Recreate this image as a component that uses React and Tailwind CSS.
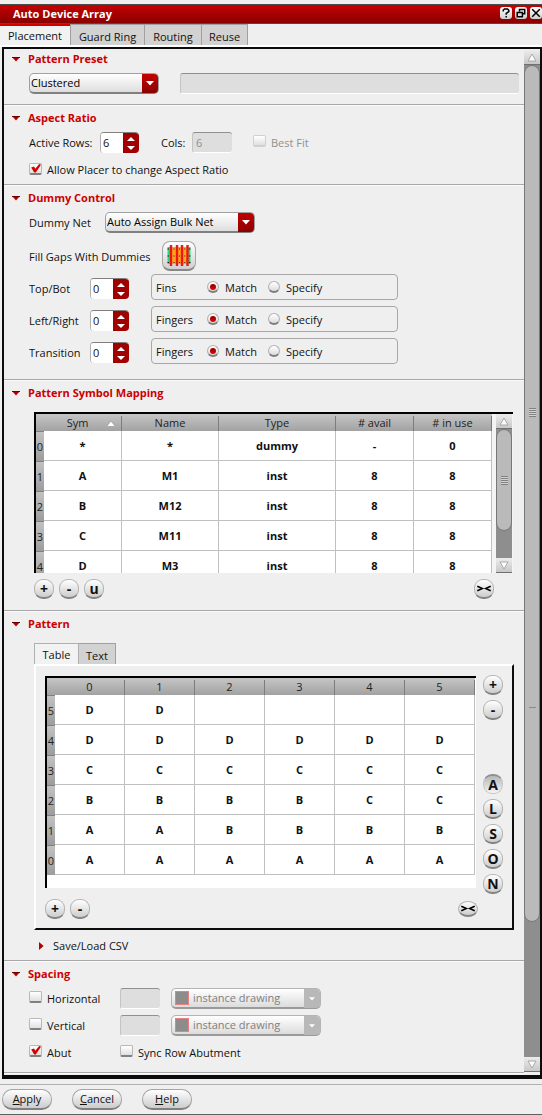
import React from "react";

const SECTION_BORDER = "border-b border-[#a8a8a8] shadow-[0_1px_0_#fafafa]";

function Section({ title, first, className = "", children }) {
  return (
    <section className={`${SECTION_BORDER} ${first ? "pt-px" : "pt-1"} ${className}`}>
      <h2 className="flex h-[18px] items-center pl-2 text-[11px] font-bold text-[#cc0000]">
        <button type="button" aria-label={`Collapse ${title}`} className="w-4">
          <svg width="8" height="5" viewBox="0 0 8 5" className="block">
            <path d="M0 0h8L4 4.6z" fill="#b00000" />
            <path d="M0 0h8v1H0z" fill="#6b0000" />
          </svg>
        </button>
        {title}
      </h2>
      {children}
    </section>
  );
}

function Combo({ label, value, width, disabled, swatch }) {
  return (
    <span className={`relative flex h-[21px] ${width}`}>
      <select
        aria-label={label}
        disabled={disabled}
        className={`h-full w-full appearance-none rounded-[5px] border border-b-2 bg-linear-to-b pr-5 text-[11px] leading-4 opacity-100 ${
          disabled
            ? "border-[#b4b4b4] border-b-[#9a9a9a] from-white to-[#dcdcdc] text-[#808080]"
            : "border-[#a0a0a0] border-b-[#808080] from-white to-[#dedede] text-black"
        } ${swatch ? "pl-[21px]" : "pl-px"}`}
      >
        <option>{value}</option>
      </select>
      {swatch && (
        <span className="pointer-events-none absolute top-[3px] left-1 h-[14px] w-[14px] border border-[#e88080] bg-[#8c8c8c]" />
      )}
      <span
        className={`pointer-events-none absolute top-px right-px bottom-px flex w-4 items-center justify-center rounded-r-[4px] ${
          disabled ? "bg-[#b8b8b8]" : "bg-linear-to-b from-[#c40000] to-[#8c0000]"
        }`}
      >
        <svg width={disabled ? 6 : 8} height={disabled ? 4 : 5} viewBox="0 0 8 5">
          <path d="M0 0h8L4 4.6z" fill="#fff" />
        </svg>
      </span>
    </span>
  );
}

function Spinner({ label, value }) {
  return (
    <span className="flex h-[21px] w-[39px] overflow-hidden rounded-[4px] border-t border-l border-t-[#808080] border-l-[#b0b0b0]">
      <input
        type="text"
        role="spinbutton"
        aria-valuenow={value}
        aria-label={label}
        defaultValue={value}
        className="w-full min-w-0 bg-white pl-[2px] text-[11px] outline-none"
      />
      <span className="flex w-4 shrink-0 flex-col items-center justify-center gap-[5px] bg-[#a00000]">
        <button type="button" aria-label={`Increase ${label}`}>
          <svg width="8" height="4" viewBox="0 0 8 4" className="block">
            <path d="M4 0l4 4H0z" fill="#fff" />
          </svg>
        </button>
        <button type="button" aria-label={`Decrease ${label}`}>
          <svg width="8" height="4" viewBox="0 0 8 4" className="block">
            <path d="M0 0h8L4 4z" fill="#fff" />
          </svg>
        </button>
      </span>
    </span>
  );
}

function Check({ label, checked, disabled }) {
  return (
    <label className={`flex items-center gap-[5px] whitespace-nowrap ${disabled ? "text-[#909090]" : ""}`}>
      <span className="relative mb-[3px] flex">
        <input
          type="checkbox"
          defaultChecked={checked}
          disabled={disabled}
          className={`h-3 w-[13px] appearance-none rounded-[2px] border border-b-2 bg-linear-to-b from-white to-[#e0e0e0] ${
            disabled ? "border-[#d0d0d0]" : "border-[#b8b8b8] border-b-[#808080]"
          }`}
        />
        {checked && (
          <svg width="10" height="9" viewBox="0 0 10 9" className="pointer-events-none absolute top-px left-[2px]">
            <path d="M0.2 3.4L3 2.4l1.3 2.4L8.2 0 10 0.8 4.8 8.6H3.2z" fill="#d40000" />
          </svg>
        )}
      </span>
      {label}
    </label>
  );
}

function Radio({ name, label, checked }) {
  return (
    <label className="flex items-center gap-[6px]">
      <span className="relative mb-[3px] flex">
        <input
          type="radio"
          name={name}
          defaultChecked={checked}
          className="h-3 w-3 appearance-none rounded-full border border-b-2 border-[#b0b0b0] border-b-[#7c7c7c] bg-linear-to-b from-white to-[#dcdcdc]"
        />
        {checked && (
          <span className="pointer-events-none absolute top-[3px] left-[3px] h-[6px] w-[6px] rounded-full bg-linear-to-b from-[#8c0000] to-[#f00000]" />
        )}
      </span>
      {label}
    </label>
  );
}

function RoundButton({ children, label, pressed, flat }) {
  return (
    <button
      type="button"
      aria-label={label}
      aria-pressed={pressed}
      className={`flex w-5 items-center justify-center text-[14px] leading-none font-bold ${
        flat ? "h-4 rounded-[50%]" : "h-5 rounded-[9px]"
      } ${
        pressed
          ? "border border-t-2 border-[#c8c8c8] border-t-[#909090] bg-linear-to-b from-[#b8b8b8] to-[#f4f4f4]"
          : "border border-b-2 border-[#b4b4b4] border-b-[#848484] bg-linear-to-b from-white to-[#cdcdcd]"
      }`}
    >
      {children}
    </button>
  );
}

function CollapseGlyph() {
  return (
    <svg width="14" height="7" viewBox="0 0 14 7" fill="none" stroke="#000" strokeWidth="1.5">
      <path d="M0.3 1.2L5.4 3.5 0.3 5.8M13.7 1.2L8.6 3.5l5.1 2.3" />
    </svg>
  );
}

function ScrollArrow({ down }) {
  return (
    <button
      type="button"
      aria-label={down ? "Scroll down" : "Scroll up"}
      className="flex h-[15px] shrink-0 items-center justify-center border-b border-[#707070] bg-linear-to-b from-[#ececec] to-[#c8c8c8]"
    >
      <svg width="10" height="9" viewBox="0 0 10 9">
        <path
          d={down ? "M1 1h8L5 8z" : "M5 1l4 7H1z"}
          fill="#fafafa"
          stroke="#9a9a9a"
          strokeWidth="0.8"
        />
      </svg>
    </button>
  );
}

function Grip() {
  return (
    <span className="h-[9px] w-[7px] bg-[repeating-linear-gradient(to_bottom,#808080_0,#808080_1px,#d4d4d4_1px,#d4d4d4_2px)]" />
  );
}

const HEAD = "h-[17px] bg-linear-to-b from-[#c6c6c6] to-[#a2a2a2] p-0 text-center align-bottom font-normal text-[#222]";
const ROW_HEAD =
  "h-[30px] overflow-hidden border-t border-[#808080] bg-linear-to-b from-[#c2c2c2] to-[#9c9c9c] p-0 text-center font-normal text-[#222]";
const CELL = "h-[30px] border-r border-b border-[#c0c0c0] bg-white p-0 text-center font-bold";

const MAPPING = [
  ["*", "*", "dummy", "-", "0"],
  ["A", "M1", "inst", "8", "8"],
  ["B", "M12", "inst", "8", "8"],
  ["C", "M11", "inst", "8", "8"],
  ["D", "M3", "inst", "8", "8"],
];

const PATTERN = [
  ["D", "D", "", "", "", ""],
  ["D", "D", "D", "D", "D", "D"],
  ["C", "C", "C", "C", "C", "C"],
  ["B", "B", "B", "B", "C", "C"],
  ["A", "A", "B", "B", "B", "B"],
  ["A", "A", "A", "A", "A", "A"],
];

function HeadCell({ children, sorted }) {
  return (
    <th scope="col" className={HEAD}>
      <span className={`relative mt-[2px] flex h-[15px] items-center justify-center border-r border-[#7c7c7c] pb-[2px] ${sorted ? "pr-[10px]" : ""}`}>
        {children}
        {sorted && (
          <svg width="8" height="5" viewBox="0 0 8 5" className="absolute top-[5px] right-[6px]">
            <path d="M4 0l4 5H0z" fill="#fff" />
            <path d="M0 5L4 0l4 5" fill="none" stroke="#666" strokeWidth="0.4" />
          </svg>
        )}
      </span>
    </th>
  );
}

function MappingTable() {
  return (
    <div className="mt-[10px] mr-[11px] ml-[30px] flex h-[161px] overflow-hidden border-t-2 border-l-2 border-black bg-[#f4f4f4]">
      <div className="mr-1 flex-1 overflow-hidden">
        <table className="w-full table-fixed border-separate border-spacing-0">
          <colgroup>
            <col className="w-2" />
            <col className="w-[78px]" />
            <col className="w-[97px]" />
            <col />
            <col className="w-[78px]" />
            <col className="w-[78px]" />
          </colgroup>
          <thead>
            <tr>
              <td className={HEAD} />
              <HeadCell sorted>Sym</HeadCell>
              <HeadCell>Name</HeadCell>
              <HeadCell>Type</HeadCell>
              <HeadCell># avail</HeadCell>
              <HeadCell># in use</HeadCell>
            </tr>
          </thead>
          <tbody>
            {MAPPING.map((row, i) => (
              <tr key={i}>
                <th scope="row" className={ROW_HEAD}>{i}</th>
                {row.map((value, j) => (
                  <td key={j} className={CELL}>{value}</td>
                ))}
              </tr>
            ))}
          </tbody>
        </table>
      </div>
      <div className="mr-px flex w-4 flex-col bg-[#8e8e8e]">
        <ScrollArrow />
        <div className="flex flex-[100] items-center justify-center rounded-[8px] border border-[#787878] bg-[#bababa]">
          <Grip />
        </div>
        <div className="flex-[27]" />
        <ScrollArrow down />
      </div>
    </div>
  );
}

function PatternTable() {
  return (
    <div className="mt-px flex-1 self-start border-t-2 border-l-2 border-black bg-white pr-px pb-[13px]">
      <table className="w-full table-fixed border-separate border-spacing-0">
        <colgroup>
          <col className="w-2" />
        </colgroup>
        <thead>
          <tr>
            <td className={HEAD} />
            {[0, 1, 2, 3, 4, 5].map((n) => (
              <HeadCell key={n}>{n}</HeadCell>
            ))}
          </tr>
        </thead>
        <tbody>
          {PATTERN.map((row, i) => (
            <tr key={i}>
              <th scope="row" className={ROW_HEAD}>{5 - i}</th>
              {row.map((value, j) => (
                <td key={j} className={CELL}>{value}</td>
              ))}
            </tr>
          ))}
        </tbody>
      </table>
    </div>
  );
}

function DummyRow({ label, unit }) {
  return (
    <div className="flex h-[26px] items-center">
      <span className="w-[61px] pt-1">{label}</span>
      <span className="pt-[3px]">
        <Spinner label={label} value="0" />
      </span>
      <fieldset
        aria-label={`${label} ${unit}`}
        className="ml-[22px] flex h-[26px] w-[247px] items-center rounded-[4px] border border-[#a8a8a8] pt-[2px] pl-1"
      >
        <span className="w-[51px]">{unit}</span>
        <span className="flex w-[61px]">
          <Radio name={label} label="Match" checked />
        </span>
        <Radio name={label} label="Specify" />
      </fieldset>
    </div>
  );
}

const DISABLED_FIELD =
  "h-[21px] rounded-[3px] border-t border-l border-t-[#909090] border-l-[#c4c4c4] border-b border-b-white bg-[#dedede] text-[#909090]";

function SpacingRow({ label }) {
  return (
    <div className="flex h-[21px] items-center">
      <span className="flex w-[91px]">
        <Check label={label} />
      </span>
      <input aria-label={`${label} spacing`} disabled className={`${DISABLED_FIELD} mr-[11px] w-10`} />
      <Combo label={`${label} layer`} value="instance drawing" width="w-[150px]" disabled swatch />
    </div>
  );
}

function TitleButton({ label, children }) {
  return (
    <button
      type="button"
      aria-label={label}
      className="flex h-3 w-3 items-center justify-center rounded-[3px] bg-linear-to-b from-white to-[#d0d0d0]"
    >
      <svg width="10" height="10" viewBox="0 0 10 10" fill="none" stroke="#000" strokeWidth="1.5">
        {children}
      </svg>
    </button>
  );
}

function FooterButton({ children }) {
  return (
    <button
      type="button"
      className="h-[21px] w-[50px] rounded-[10px] border border-b-2 border-[#a4a4a4] border-b-[#808080] bg-linear-to-b from-white to-[#cccccc] leading-4"
    >
      {children}
    </button>
  );
}

export default function App() {
  return (
    <div className="bg-[#efefef] pt-1 font-['Open_Sans','Noto_Sans',sans-serif] text-[11px] leading-4 text-[#111]">
      <header className="flex h-5 items-center border-y border-[#4a4a4a] bg-linear-to-b from-[#c60000] to-[#8a0000] pl-[13px]">
        <h1 className="flex-1 font-bold text-white">Auto Device Array</h1>
        <div className="mb-[2px] flex gap-[3px]">
          <TitleButton label="Help">
            <path d="M2.2 3.6V2.2L3.4 1h3.2l1.2 1.2v1.3L5.2 5.4v1.4M5.2 8v1.5" />
          </TitleButton>
          <TitleButton label="Restore">
            <path d="M3.5 3.5v-2h5.2v4.2H6.8M1.2 4.5h5.2v4.3H1.2z" />
          </TitleButton>
          <TitleButton label="Close">
            <path d="M1.2 1.2l7.6 7.6M8.8 1.2L1.2 8.8" />
          </TitleButton>
        </div>
      </header>

      <nav role="tablist" className="flex h-[21px]">
        <button type="button" role="tab" aria-selected="true" className="w-[70px] border-t-2 border-[#d40000] bg-[#f2f2f2]">
          Placement
        </button>
        <button type="button" role="tab" className="w-[75px] border-t border-r border-l border-[#a0a0a0] bg-[#d2d2d2] pt-[3px]">
          Guard Ring
        </button>
        <button type="button" role="tab" className="w-[57px] border-t border-r border-[#a0a0a0] bg-[#d2d2d2] pt-[3px]">
          Routing
        </button>
        <button type="button" role="tab" className="w-[46px] border-t border-r border-[#a0a0a0] bg-[#d2d2d2] pt-[3px]">
          Reuse
        </button>
      </nav>
      <div className="h-[2px] bg-white" />

      <main className="ml-[2px] flex border-t-2 border-r-2 border-b-4 border-l-2 border-[#0c0c0c]">
        <div className="min-w-0 flex-1 pb-[2px]">
          <Section title="Pattern Preset" first className="pb-[10px]">
            <div className="mt-[5px] flex gap-[21px] pr-[5px] pl-[25px]">
              <Combo label="Pattern preset" value="Clustered" width="w-[130px]" />
              <input aria-label="Preset options" disabled className={`${DISABLED_FIELD} min-w-0 flex-1`} />
            </div>
          </Section>

          <Section title="Aspect Ratio" className="pb-[5px]">
            <div className="mt-[5px] flex h-[21px] items-center pl-[25px]">
              <span className="w-[71px]">Active Rows:</span>
              <Spinner label="Active Rows" value="6" />
              <label htmlFor="cols" className="ml-[22px] w-[31px]">Cols:</label>
              <input id="cols" disabled defaultValue="6" className={`${DISABLED_FIELD} mr-[21px] w-10 pl-[3px]`} />
              <Check label="Best Fit" disabled />
            </div>
            <div className="mt-2 flex h-[18px] items-center pl-[25px]">
              <Check label="Allow Placer to change Aspect Ratio" checked />
            </div>
          </Section>

          <Section title="Dummy Control" className="pb-[15px]">
            <div className="pl-[25px]">
              <div className="mt-[5px] flex items-center">
                <span className="w-[76px]">Dummy Net</span>
                <Combo label="Dummy Net" value="Auto Assign Bulk Net" width="w-[150px]" />
              </div>
              <div className="mt-2 flex items-center">
                <span className="w-[133px] pt-[2px]">Fill Gaps With Dummies</span>
                <button
                  type="button"
                  aria-label="Fill gaps with dummies"
                  className="flex h-[30px] w-[34px] items-center justify-center rounded-[8px] border border-b-2 border-[#a8a8a8] border-b-[#888888] bg-linear-to-b from-white to-[#d0d0d0]"
                >
                  <svg width="24" height="22" viewBox="0 0 24 22">
                    <path d="M3 2h18v17H3z" fill="#ffa51e" />
                    <path d="M0.5 2h2.5v17H0.5zM21 2h2.5v17H21z" fill="#23dc82" />
                    <path
                      d="M0.5 4h1.5M6.5 4h1M12 4h1M17.3 4h1M22 4h1.5M0.5 11h1.5M6.5 11h1M12 11h1M17.3 11h1M22 11h1.5M0.5 17.5h1.5M6.5 17.5h1M12 17.5h1M17.3 17.5h1M22 17.5h1.5"
                      stroke="#222"
                      strokeWidth="1"
                    />
                    <path d="M4 0v21M10 0v21M15 0v21M20.5 0v21" stroke="#f01414" strokeWidth="2.4" />
                  </svg>
                </button>
              </div>
              <div className="mt-[3px] flex flex-col gap-[6px]">
                <DummyRow label="Top/Bot" unit="Fins" />
                <DummyRow label="Left/Right" unit="Fingers" />
                <DummyRow label="Transition" unit="Fingers" />
              </div>
            </div>
          </Section>

          <Section title="Pattern Symbol Mapping" className="pb-[11px]">
            <MappingTable />
            <div className="mt-[6px] flex gap-[5px] pr-[30px] pl-[30px]">
              <RoundButton label="Add symbol">+</RoundButton>
              <RoundButton label="Remove symbol">-</RoundButton>
              <RoundButton label="Update symbols">u</RoundButton>
              <span className="flex-1" />
              <RoundButton label="Compact mapping"><CollapseGlyph /></RoundButton>
            </div>
          </Section>

          <Section title="Pattern">
            <div className="mr-[10px] ml-[30px] pt-[10px]">
              <div role="tablist" className="flex h-[21px]">
                <button type="button" role="tab" aria-selected="true" className="w-[45px] border-t border-r border-l border-[#b0b0b0] bg-[#f2f2f2] pt-px">
                  Table
                </button>
                <button type="button" role="tab" className="w-[37px] border-t border-r border-[#a0a0a0] bg-[#d2d2d2] pt-[3px]">
                  Text
                </button>
              </div>
              <div className="border-2 border-t-white border-r-[#0c0c0c] border-b-[#0c0c0c] border-l-white p-[9px]">
                <div className="flex gap-[7px]">
                  <PatternTable />
                  <div className="flex flex-col gap-[5px]">
                    <RoundButton label="Add row">+</RoundButton>
                    <RoundButton label="Remove row">-</RoundButton>
                    <span className="h-[44px]" />
                    <RoundButton pressed>A</RoundButton>
                    <RoundButton>L</RoundButton>
                    <RoundButton>S</RoundButton>
                    <RoundButton>O</RoundButton>
                    <RoundButton>N</RoundButton>
                  </div>
                </div>
                <div className="mt-[5px] flex items-center gap-[5px] pr-[25px]">
                  <RoundButton label="Add column">+</RoundButton>
                  <RoundButton label="Remove column">-</RoundButton>
                  <span className="flex-1" />
                  <RoundButton label="Compact pattern" flat><CollapseGlyph /></RoundButton>
                </div>
              </div>
            </div>
            <button type="button" className="flex h-[30px] items-center pt-px pl-[35px]">
              <span className="w-[14px]">
                <svg width="5" height="8" viewBox="0 0 5 8" className="block">
                  <path d="M0 0l4.6 4L0 8z" fill="#b00000" />
                </svg>
              </span>
              Save/Load CSV
            </button>
          </Section>

          <Section title="Spacing" className="pb-[9px]">
            <div className="mt-[5px] flex flex-col gap-[6px] pl-[25px]">
              <SpacingRow label="Horizontal" />
              <SpacingRow label="Vertical" />
              <div className="flex h-[21px] items-center">
                <span className="flex w-[91px]">
                  <Check label="Abut" checked />
                </span>
                <Check label="Sync Row Abutment" />
              </div>
            </div>
          </Section>
        </div>

        <div className="mt-px mb-[3px] flex w-4 flex-col bg-[#8e8e8e]">
          <ScrollArrow />
          <div className="flex flex-[857] flex-col items-center rounded-[8px] border border-[#787878] bg-[#bababa]">
            <span className="flex-[341]" />
            <Grip />
            <span className="flex-[290]" />
            <span className="h-px w-[7px] bg-[#8a8a8a]" />
            <span className="flex-[213]" />
          </div>
          <div className="flex-[135]" />
          <ScrollArrow down />
        </div>
      </main>

      <div className="h-[6px] border-b border-[#b0b0b0]" />
      <footer className="flex gap-5 border-b border-[#606060] pt-1 pb-1 pl-[2px]">
        <FooterButton><u>A</u>pply</FooterButton>
        <FooterButton><u>C</u>ancel</FooterButton>
        <FooterButton><u>H</u>elp</FooterButton>
      </footer>
    </div>
  );
}
